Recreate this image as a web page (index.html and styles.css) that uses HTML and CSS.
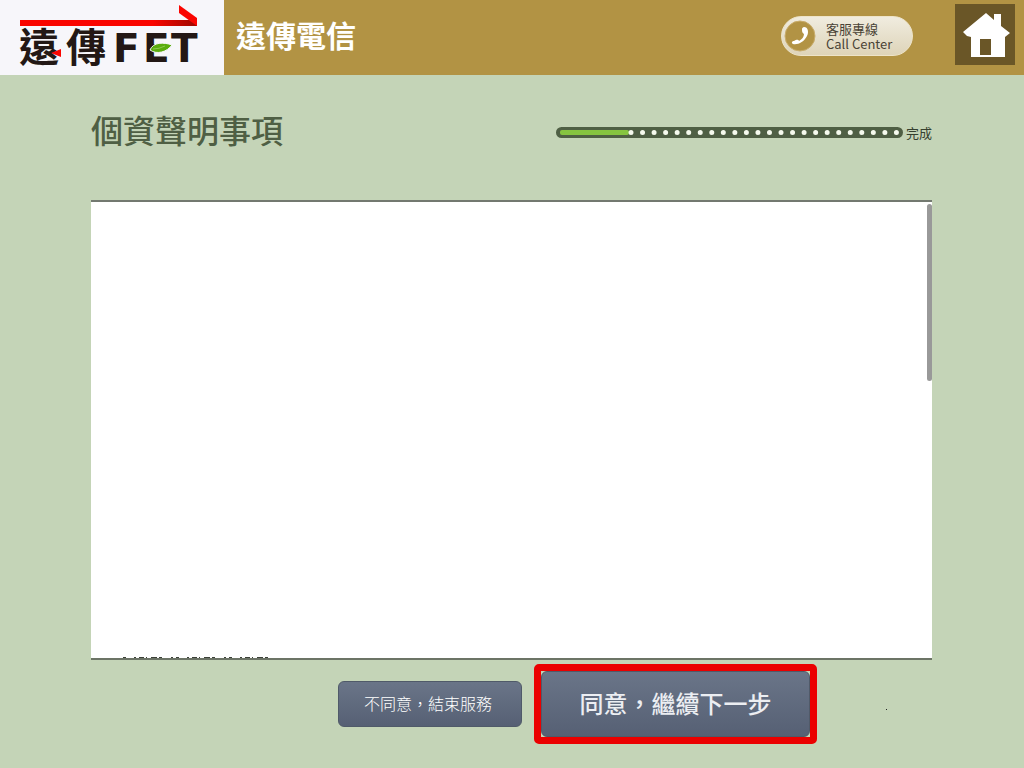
FILE: index.html
```html
<!DOCTYPE html>
<html lang="zh-Hant">
<head>
    <meta charset="UTF-8">
    <meta name="viewport" content="width=device-width, initial-scale=1.0">
    <title>遠傳電信</title>
    <link rel="stylesheet" href="styles.css">
</head>
<body>
    <header class="header">
        <div class="logo">
            <svg width="224" height="75" viewBox="0 0 224 75" role="img" aria-label="遠傳 FET">
                <defs>
                    <linearGradient id="arrow">
                        <stop offset="0.75" stop-color="#fa0500"/>
                        <stop offset="1" stop-color="#9c0800"/>
                    </linearGradient>
                </defs>
                <path d="M20 20H197V26H20Z" fill="url(#arrow)"/>
                <path d="M179 5L197 18V26L179 13Z" fill="#fa0500"/>
                <text class="logo-zh" x="19" y="62">遠</text>
                <text class="logo-zh" x="66" y="62">傳</text>
                <path d="M51 53L61 49V57Z" fill="#fa0500"/>
                <text class="logo-en" x="113" y="62">F</text>
                <text class="logo-en" x="143" y="62">E</text>
                <text class="logo-en" x="171" y="62">T</text>
                <path d="M150 50C153 42 164 42 172 45C167 52 157 55 150 50Z" fill="#5aad0d" stroke="#f7f6fa" stroke-width="1"/>
                <path d="M153 49Q159 49 165 46" fill="none" stroke="#8cc850"/>
            </svg>
        </div>
        <h1 class="brand">遠傳電信</h1>
        <button class="call" type="button">
            <svg width="32" height="32" viewBox="0 0 32 32" aria-hidden="true">
                <circle cx="16" cy="16" r="15" fill="#b29344" stroke="#c9ad6c"/>
                <path d="M20 7C24 7 25 12 23 16C20 22 14 25 9 24C7 23 8 21 10 21C12 20 14 19 15 21C18 19 20 17 20 14C18 13 18 11 18 9C18 8 19 7 20 7Z" fill="#fff"/>
            </svg>
            <span class="call-text">
                <span>客服專線</span>
                <span>Call Center</span>
            </span>
        </button>
        <a class="home" href="#" aria-label="首頁">
            <svg width="60" height="61" viewBox="0 0 60 61" aria-hidden="true">
                <path fill="#fff" fill-rule="evenodd" d="M8 28L31 9L39 16V10H46V22L55 29L50 33V53H16V33L12 32ZM25 35V51H36V35Z"/>
            </svg>
        </a>
    </header>

    <main class="main">
        <div class="title-row">
            <h2 class="title">個資聲明事項</h2>
            <div class="progress">
                <svg width="347" height="11" viewBox="0 0 347 11" role="img" aria-label="進度">
                    <rect width="347" height="11" rx="5.5" fill="#4f5f44"/>
                    <rect x="4" y="3" width="69" height="5" rx="2" fill="#86c440"/>
                    <path d="M75 5.5H342" fill="none" stroke="#f6faee" stroke-width="5" stroke-linecap="round" stroke-dasharray="0 11.54"/>
                </svg>
                <span>完成</span>
            </div>
        </div>

        <section class="statement">
            <div class="scroll-thumb"></div>
            <svg class="clipped-line" width="160" height="1" viewBox="0 0 160 1" aria-hidden="true">
                <path d="M6 0.5H160" stroke="#3b4038" stroke-dasharray="3 8 2 3 5 2 1 4 6 2 3 9 2 3"/>
            </svg>
        </section>

        <div class="actions">
            <button class="button" type="button">不同意，結束服務</button>
            <div class="highlight">
                <button class="button button-next" type="button">同意，繼續下一步</button>
            </div>
            <span class="dot"></span>
        </div>
    </main>
</body>
</html>
```

FILE: styles.css
```css
* {
    box-sizing: border-box;
}
body {
    margin: 0;
    min-height: 100vh;
    background: #c4d4b7;
    font-family: "Noto Sans", "Noto Sans CJK TC", sans-serif;
}
svg {
    display: block;
}
.header {
    display: flex;
    align-items: center;
    height: 75px;
    padding-right: 9px;
    background: #b29344;
}
.logo {
    background: #f7f6fa;
}
.logo-zh {
    font: bold 40px "Noto Sans CJK TC", sans-serif;
    fill: #231815;
}
.logo-en {
    font: bold 39px "DejaVu Sans", sans-serif;
    fill: #231815;
}
.brand {
    margin: 0 auto 0 12px;
    padding-bottom: 4px;
    color: #fff;
    font-size: 30px;
    line-height: 40px;
}
.call {
    display: flex;
    align-items: center;
    gap: 10px;
    width: 132px;
    height: 40px;
    margin: 0 42px 4px 0;
    padding: 0 2px;
    border: 1px solid #eee4c9;
    border-radius: 20px;
    background: linear-gradient(#f0ecdf, #ded4b9);
    color: #4a4336;
    white-space: nowrap;
}
.call-text {
    display: flex;
    flex-direction: column;
    font-family: "Noto Sans CJK TC", sans-serif;
    font-size: 13px;
    line-height: 15px;
    text-align: left;
}
.home {
    margin-bottom: 6px;
    background: #6a5627;
}
.main {
    padding: 0 92px 0 91px;
}
.title-row {
    display: flex;
    align-items: center;
    justify-content: space-between;
    height: 125px;
    padding-bottom: 10px;
}
.title {
    margin: 0;
    padding-bottom: 8px;
    color: #4f5f44;
    font-family: "Noto Sans CJK TC", sans-serif;
    font-size: 32px;
    font-weight: 500;
    line-height: 40px;
}
.progress {
    display: flex;
    align-items: center;
    gap: 3px;
    color: #35402f;
    font-size: 13px;
    line-height: 16px;
}
.statement {
    display: flex;
    flex-direction: column;
    justify-content: space-between;
    height: 460px;
    border-top: 2px solid #737970;
    border-bottom: 2px solid #6c7466;
    background: #fff;
}
.scroll-thumb {
    align-self: flex-end;
    width: 5px;
    height: 177px;
    margin-top: 2px;
    border-radius: 3px;
    background: #999;
}
.clipped-line {
    margin-left: 26px;
}
.actions {
    display: flex;
    align-items: center;
    justify-content: flex-end;
    padding: 4px 45px 20px 0;
}
.button {
    width: 184px;
    height: 46px;
    padding: 0 4px 2px 0;
    border: 1px solid #505a69;
    border-radius: 6px;
    background: linear-gradient(#6a7588, #566074);
    color: #fff;
    font-family: "Noto Sans CJK TC", sans-serif;
    font-size: 16px;
    font-weight: 300;
}
.highlight {
    margin: 0 69px 0 12px;
    border: 7px solid #eb0000;
    border-radius: 5px;
    background: #c4d4b7;
}
.button-next {
    display: block;
    width: 269px;
    height: 66px;
    padding: 0 0 4px;
    color: #eceef2;
    font-size: 24px;
    font-weight: 500;
}
.dot {
    width: 1px;
    height: 1px;
    margin-top: 10px;
    background: #222;
}
```
